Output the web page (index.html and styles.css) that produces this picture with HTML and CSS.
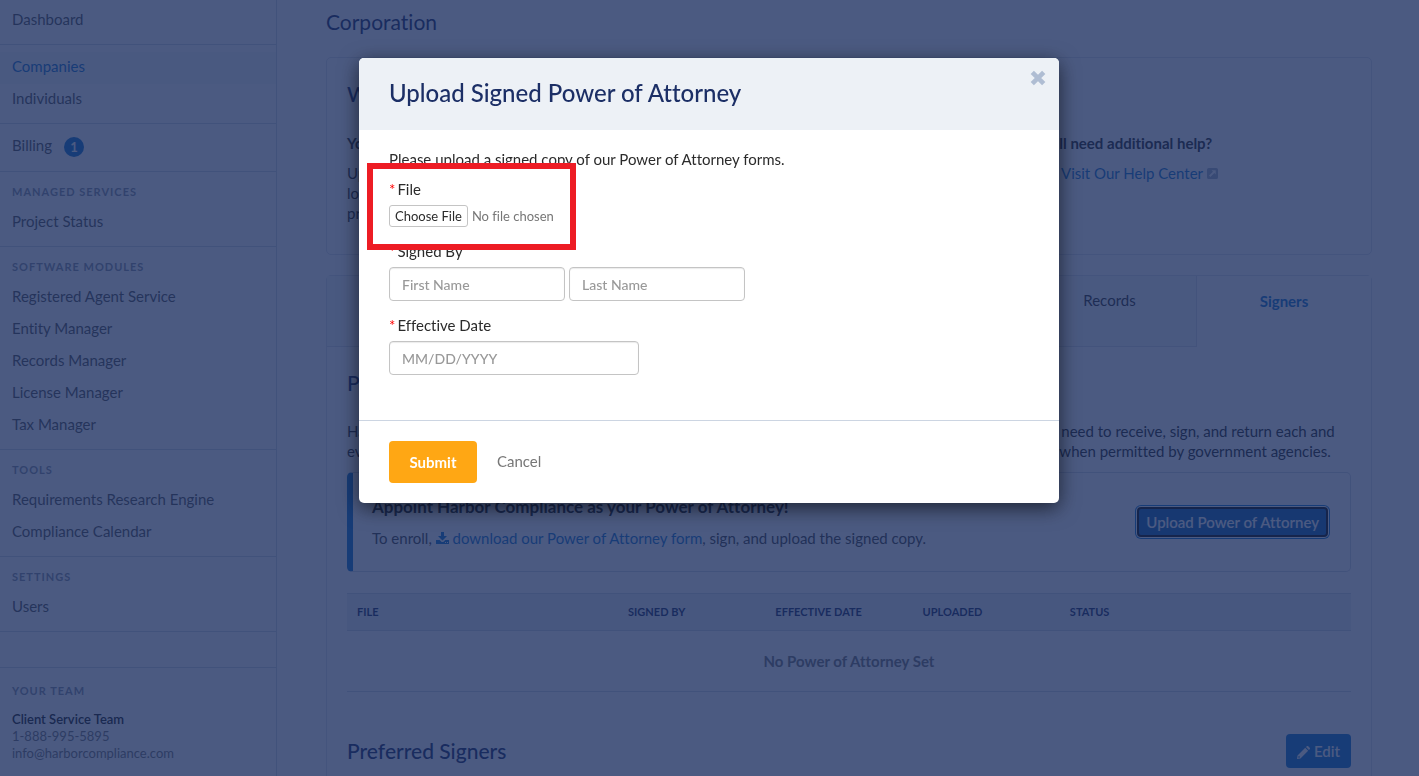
FILE: index.html
```
<!DOCTYPE html>
<html lang="en">
<head>
    <meta charset="UTF-8">
    <meta name="viewport" content="width=device-width, initial-scale=1.0">
    <title>Upload Signed Power of Attorney</title>
    <link rel="stylesheet" href="styles.css">
</head>
<body class="modal-open">
    <div class="page">
        <aside class="sidebar">
            <nav>
                <ul class="nav-group first">
                    <li><a href="#">Dashboard</a></li>
                </ul>
                <ul class="nav-group">
                    <li><a href="#" class="active">Companies</a></li>
                    <li><a href="#">Individuals</a></li>
                </ul>
                <ul class="nav-group billing">
                    <li><a href="#">Billing <span class="badge">1</span></a></li>
                </ul>
                <h4>Managed Services</h4>
                <ul class="nav-group">
                    <li><a href="#">Project Status</a></li>
                </ul>
                <h4>Software Modules</h4>
                <ul class="nav-group">
                    <li><a href="#">Registered Agent Service</a></li>
                    <li><a href="#">Entity Manager</a></li>
                    <li><a href="#">Records Manager</a></li>
                    <li><a href="#">License Manager</a></li>
                    <li><a href="#">Tax Manager</a></li>
                </ul>
                <h4>Tools</h4>
                <ul class="nav-group">
                    <li><a href="#">Requirements Research Engine</a></li>
                    <li><a href="#">Compliance Calendar</a></li>
                </ul>
                <h4>Settings</h4>
                <ul class="nav-group">
                    <li><a href="#">Users</a></li>
                </ul>
            </nav>
            <div class="team">
                <h4>Your Team</h4>
                <strong>Client Service Team</strong>
                <span>1-888-995-5895</span>
                <span>info@harborcompliance.com</span>
            </div>
        </aside>

        <main class="content">
            <p class="entity-type">Corporation</p>

            <section class="card help-card">
                <h2>What do I need to do?</h2>
                <div class="help-columns">
                    <div>
                        <h3>You can appoint us</h3>
                        <p>Upload the signed form<br>located on this page to<br>provide authorization.</p>
                    </div>
                    <div>
                        <h3>Still need additional help?</h3>
                        <p class="help-link">
                            <a href="#">Visit Our Help Center</a>
                            <svg class="icon-external" viewBox="0 0 12 12"><path fill-rule="evenodd" d="M2 0h8a2 2 0 0 1 2 2v8a2 2 0 0 1-2 2H2a2 2 0 0 1-2-2V2a2 2 0 0 1 2-2zM5 2.500l1.500 1.500L2.200 8.300l1.500 1.500L8 5.500 9.500 7V2.500z"/></svg>
                        </p>
                    </div>
                </div>
            </section>

            <section class="card">
                <ul class="tabs">
                    <li><a href="#">Overview</a></li>
                    <li><a href="#">Licenses</a></li>
                    <li><a href="#">Entity</a></li>
                    <li><a href="#">Tax</a></li>
                    <li><a href="#">Records</a></li>
                    <li><a href="#" class="active">Signers</a></li>
                </ul>
                <div class="card-body">
                    <h2>Power of Attorney</h2>
                    <p class="intro">Harbor Compliance can typically sign certain forms on your behalf when you appoint us, which saves you the need to receive, sign, and return each and<br>every form. We will also use the Power of Attorney that you provide to sign your ordinary government filings when permitted by government agencies.</p>

                    <div class="callout">
                        <div>
                            <h3>Appoint Harbor Compliance as your Power of Attorney!</h3>
                            <p>To enroll,
                                <a href="#"><svg class="icon-download" viewBox="0 0 13 12"><path fill-rule="evenodd" d="M5 0h3v4h3L6.500 8.500 2 4h3zM0 8h3.700l1.400 1.400a2 2 0 0 0 2.800 0L9.300 8H13v4H0zM9 10h1v1H9zm2 0h1v1h-1z"/></svg> download our Power of Attorney form</a>, sign, and upload the signed copy.</p>
                        </div>
                        <button type="button" class="button focused">Upload Power of Attorney</button>
                    </div>

                    <table>
                        <thead>
                            <tr>
                                <th class="col-file">File</th>
                                <th>Signed By</th>
                                <th>Effective Date</th>
                                <th>Uploaded</th>
                                <th class="col-status">Status</th>
                            </tr>
                        </thead>
                        <tbody>
                            <tr>
                                <td colspan="5">No Power of Attorney Set</td>
                            </tr>
                        </tbody>
                    </table>

                    <div class="signers-header">
                        <h2>Preferred Signers</h2>
                        <button type="button" class="button edit-button">
                            <svg class="icon-pencil" viewBox="0 0 12 12"><path fill-rule="evenodd" d="M8.300 1L9 .300a1 1 0 0 1 1.400 0l1.300 1.300a1 1 0 0 1 0 1.400L11 3.700zM7.600 1.700l2.700 2.700L3.200 11.500 0 12l.5-3.200zM1.500 9.300l-.3 1.500 1.500-.3v-.7H2v-.8z"/></svg>
                            Edit
                        </button>
                    </div>
                </div>
            </section>
        </main>
    </div>

    <div class="backdrop">
        <form class="modal" role="dialog" aria-labelledby="modalTitle">
            <div class="modal-header">
                <h1 id="modalTitle">Upload Signed Power of Attorney</h1>
                <button type="button" class="close" aria-label="Close">
                    <svg viewBox="0 0 14 14"><path d="M2 2l10 10M12 2L2 12"/></svg>
                </button>
            </div>
            <div class="modal-body">
                <p>Please upload a signed copy of our Power of Attorney forms.</p>
                <div class="field file-field">
                    <label for="file">File</label>
                    <input type="file" id="file">
                </div>
                <div class="field">
                    <label for="firstName">Signed By</label>
                    <div class="name-inputs">
                        <input type="text" id="firstName" placeholder="First Name">
                        <input type="text" id="lastName" aria-label="Last Name" placeholder="Last Name">
                    </div>
                </div>
                <div class="field">
                    <label for="effectiveDate">Effective Date</label>
                    <input type="text" id="effectiveDate" placeholder="MM/DD/YYYY">
                </div>
                <div class="highlight"></div>
            </div>
            <div class="modal-footer">
                <button type="submit" class="submit-button">Submit</button>
                <button type="button" class="cancel-button">Cancel</button>
            </div>
        </form>
    </div>
</body>
</html>
```
FILE: styles.css
```
* {
    box-sizing: border-box;
}
body {
    font-family: Lato, "Liberation Sans", sans-serif;
    font-size: 15px;
    font-variant-ligatures: none;
    line-height: 20px;
    color: #2b2b2b;
    background-color: #ffffff;
    margin: 0;
}
body.modal-open {
    height: 100vh;
    overflow: hidden;
}
h1, h2, h3, h4, p, ul {
    margin: 0;
    padding: 0;
}
ul {
    list-style: none;
}
a {
    color: #1676cf;
    text-decoration: none;
}
button, input {
    font-family: inherit;
    font-size: 15px;
    font-variant-ligatures: none;
}
h2 {
    font-size: 21px;
    line-height: 24px;
    font-weight: 500;
    color: #1c2f66;
}
h3 {
    font-size: 15px;
    line-height: 20px;
    font-weight: bold;
}
.page {
    display: flex;
    min-height: 100vh;
}

/* Sidebar */
.sidebar {
    width: 277px;
    flex-shrink: 0;
    border-right: 1px solid #d3d9e4;
}
.nav-group {
    padding: 7px 0;
    border-bottom: 1px solid #d3d9e4;
}
.nav-group.first {
    padding-top: 5px;
}
.nav-group.billing {
    padding-bottom: 8px;
}
.nav-group a {
    display: flex;
    align-items: center;
    height: 32px;
    padding: 0 12px 4px;
    color: #555555;
}
.nav-group a.active {
    color: #1676cf;
    background-color: #f6f8fa;
}
.sidebar h4 {
    padding: 10px 12px 1px;
    font-size: 11px;
    line-height: 20px;
    font-weight: bold;
    letter-spacing: 1px;
    text-transform: uppercase;
    color: #8b93a3;
}
.sidebar h4 + .nav-group {
    padding-top: 4px;
}
.badge {
    width: 20px;
    height: 20px;
    margin: 4px 0 0 12px;
    border-radius: 50%;
    background-color: #1676cf;
    color: #ffffff;
    font-size: 13px;
    font-weight: bold;
    line-height: 20px;
    text-align: center;
}
.team {
    display: flex;
    flex-direction: column;
    margin-top: 35px;
    border-top: 1px solid #d3d9e4;
    padding: 2px 12px;
    font-size: 13px;
    line-height: 17px;
    color: #777777;
}
.sidebar .team h4 {
    padding: 11px 0 10px;
}
.team strong {
    color: #222222;
    font-weight: 600;
}

/* Content */
.content {
    flex: 1;
    padding: 10px 47px 0 49px;
}
.entity-type {
    font-size: 21px;
    line-height: 24px;
    color: #1c2f66;
    margin-bottom: 23px;
}
.card {
    border: 1px solid #dde2ea;
    border-radius: 5px;
    margin-bottom: 20px;
}
.help-card {
    padding: 24px 20px 31px;
}
.help-columns {
    display: grid;
    grid-template-columns: 695px 1fr;
    margin-top: 27px;
}
.help-columns p {
    margin-top: 10px;
}
.help-link {
    padding-left: 19px;
}
.icon-external {
    width: 11px;
    height: 11px;
    fill: #a7b4c8;
}
.tabs {
    display: grid;
    grid-template-columns: repeat(6, 1fr);
}
.tabs a {
    display: block;
    height: 71px;
    padding-top: 14px;
    border-right: 1px solid #d9dee7;
    border-bottom: 1px solid #d9dee7;
    background-color: #f7f9fb;
    color: #333333;
    text-align: center;
}
.tabs a.active {
    padding-top: 15px;
    border: none;
    background-color: #ffffff;
    color: #1676cf;
    font-weight: bold;
}
.card-body {
    padding: 24px 20px;
}
.intro {
    margin: 26px 0 11px;
    white-space: nowrap;
}
.callout {
    display: flex;
    justify-content: space-between;
    align-items: center;
    padding: 22px 20px 23px 19px;
    border: 1px solid #d3d9e4;
    border-left: 6px solid #1676cf;
    border-radius: 5px;
    color: #444444;
}
.callout h3 {
    font-size: 17px;
    line-height: 24px;
    margin-bottom: 9px;
    color: #222222;
}
.icon-download {
    width: 13px;
    height: 12px;
    fill: #1676cf;
}
.button {
    height: 34px;
    padding: 0 11px;
    border: none;
    border-radius: 4px;
    background-color: #1676cf;
    color: #ffffff;
    font-weight: 600;
}
.button.focused {
    height: 30px;
    margin-right: 2px;
    padding: 0 7px;
    border: 2px solid #101010;
    background-color: #1664b8;
    box-shadow: 0 0 0 1px #ffffff, 0 0 0 2px #1676cf;
}
table {
    width: 100%;
    margin-top: 21px;
    border-collapse: collapse;
    table-layout: fixed;
}
th {
    height: 37px;
    padding: 0 10px;
    border-top: 1px solid #d3d9e4;
    border-bottom: 1px solid #d3d9e4;
    background-color: #eef2f6;
    color: #1c2f66;
    font-size: 11px;
    font-weight: bold;
    text-align: left;
    text-transform: uppercase;
}
.col-file {
    width: 27%;
}
.col-status {
    width: 29%;
}
td {
    height: 61px;
    border-bottom: 1px solid #d3d9e4;
    color: #777777;
    font-weight: bold;
    text-align: center;
}
.signers-header {
    display: flex;
    justify-content: space-between;
    align-items: center;
    margin-top: 42px;
}
.icon-pencil {
    width: 13px;
    height: 13px;
    fill: #ffffff;
    vertical-align: -2px;
}

/* Modal */
.backdrop {
    position: fixed;
    inset: 0;
    padding: 58px 1px 0 0;
    background-color: rgba(24, 44, 94, 0.78);
}
.modal {
    position: relative;
    width: 700px;
    max-width: 100%;
    margin: 0 auto;
    border-radius: 5px;
    background-color: #ffffff;
    box-shadow: 0 5px 20px rgba(0, 0, 0, 0.6);
}
.modal-header {
    display: flex;
    justify-content: space-between;
    align-items: flex-start;
    padding: 21px 13px 23px 30px;
    border-radius: 5px 5px 0 0;
    background-color: #edf1f6;
}
.modal-header h1 {
    font-size: 24px;
    line-height: 28px;
    font-weight: 500;
    color: #1c2f66;
}
.close {
    width: 16px;
    height: 16px;
    margin-top: -9px;
    padding: 0;
    border: none;
    background: none;
}
.close svg {
    display: block;
    width: 16px;
    height: 16px;
    stroke: #afbdd3;
    stroke-width: 4;
}
.modal-body {
    padding: 19px 30px 45px;
    border-bottom: 1px solid #ccd5e2;
}
.field {
    margin-top: 14px;
}
.modal-body p + .field {
    margin-top: 10px;
}
.field label {
    display: block;
    margin-bottom: 6px;
}
.field label::before {
    content: "*";
    margin-right: 2px;
    color: #ff0000;
}
.field input[type="text"] {
    display: block;
    width: 250px;
    height: 34px;
    padding: 0 12px;
    border: 1px solid #c4c4c4;
    border-radius: 4px;
    box-shadow: inset 0 1px 1px rgba(0, 0, 0, 0.08);
    font-size: 14px;
}
.field input::placeholder {
    color: #999999;
    font-weight: 500;
}
.name-inputs {
    display: flex;
    gap: 4px;
}
.field .name-inputs input[type="text"] {
    width: 176px;
}
.field input[type="file"] {
    display: block;
    height: 22px;
    color: #777777;
    font-size: 13px;
}
.field input::file-selector-button {
    height: 22px;
    margin-right: 4px;
    padding: 0 5px;
    border: 1px solid #c4c4c4;
    border-radius: 3px;
    background-color: #ffffff;
    color: #2b2b2b;
    font-family: inherit;
    font-size: 13px;
}
/* red frame drawn over the file field */
.highlight {
    position: absolute;
    top: 105px;
    left: 8px;
    width: 209px;
    height: 87px;
    border: 6px solid #ed1c24;
    pointer-events: none;
}
.modal-footer {
    display: flex;
    gap: 20px;
    padding: 20px 30px;
}
.submit-button {
    width: 88px;
    height: 42px;
    border: none;
    border-radius: 4px;
    background-color: #ffa714;
    color: #ffffff;
    font-weight: bold;
}
.cancel-button {
    padding: 0 0 2px;
    border: none;
    background: none;
    color: #777777;
}
```
